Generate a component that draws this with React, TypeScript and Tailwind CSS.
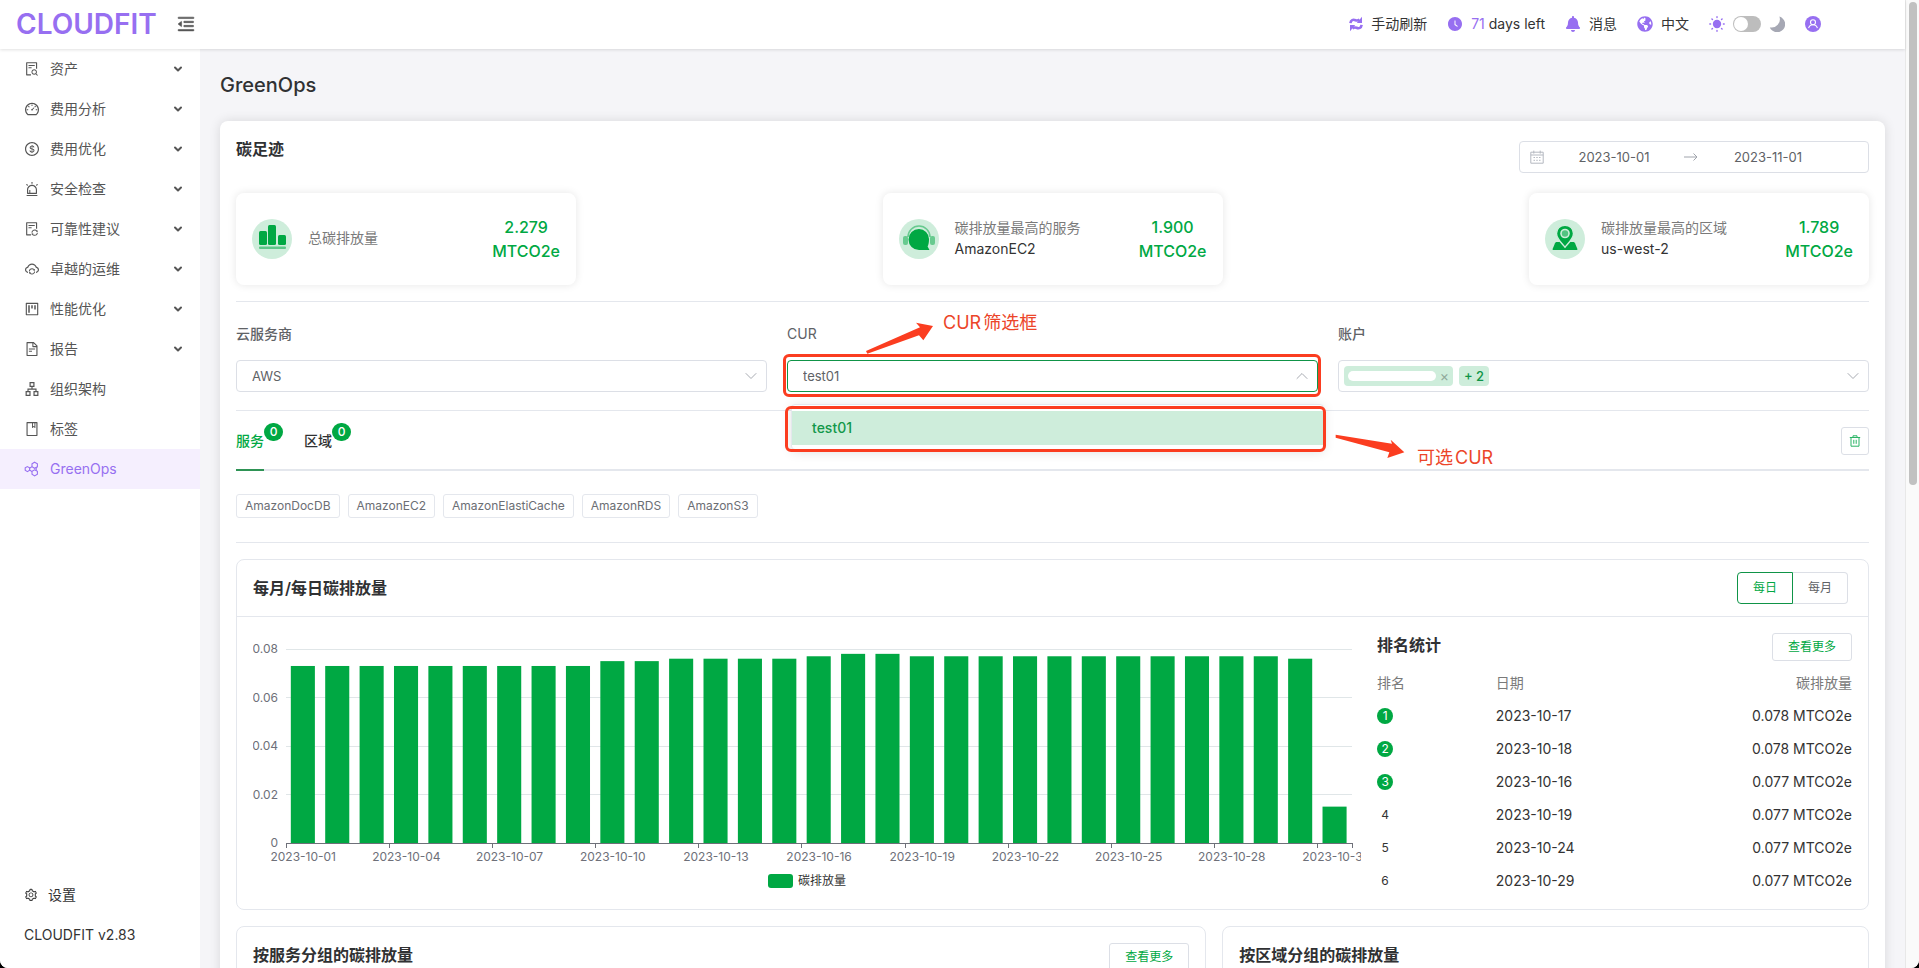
import React from "react";
import {
  AiFillClockCircle,
  AiOutlineAlert,
  AiOutlineApartment,
  AiOutlineBook,
  AiOutlineCloudSync,
  AiOutlineDashboard,
  AiOutlineDollar,
  AiOutlineFileSearch,
  AiOutlineFileSync,
  AiOutlineFileText,
  AiOutlineMenuFold,
  AiOutlineProject,
  AiOutlineSetting,
} from "react-icons/ai";
import { FaBell, FaGlobeAmericas } from "react-icons/fa";
import { ChevronDown, ChevronUp } from "lucide-react";

const GreenOpsIcon = () => (
  <svg width="16" height="16" viewBox="0 0 16 16" fill="none" stroke="currentColor" strokeWidth="1.1">
    <path d="M3.4 5.6 5.6 6.9v2.4L3.4 10.6 1.2 9.3V6.9Z" />
    <path d="M10.6 1.2 13.4 2.8v3L10.6 7.3 8 5.8v-3Z" />
    <path d="M10.6 8.8 13.4 10.3v3L10.6 14.9 8 13.3v-3Z" />
    <path d="M5.6 7.2 8 5.6M5.6 9 8 10.6M12.2 6.5v3.2" />
  </svg>
);

const menu = [
  { label: "资产", icon: <AiOutlineFileSearch />, open: true },
  { label: "费用分析", icon: <AiOutlineDashboard />, open: true },
  { label: "费用优化", icon: <AiOutlineDollar />, open: true },
  { label: "安全检查", icon: <AiOutlineAlert />, open: true },
  { label: "可靠性建议", icon: <AiOutlineFileSync />, open: true },
  { label: "卓越的运维", icon: <AiOutlineCloudSync />, open: true },
  { label: "性能优化", icon: <AiOutlineProject />, open: true },
  { label: "报告", icon: <AiOutlineFileText />, open: true },
  { label: "组织架构", icon: <AiOutlineApartment /> },
  { label: "标签", icon: <AiOutlineBook /> },
  { label: "GreenOps", icon: <GreenOpsIcon />, active: true },
];

const services = ["AmazonDocDB", "AmazonEC2", "AmazonElastiCache", "AmazonRDS", "AmazonS3"];

const daily = [
  0.073, 0.073, 0.073, 0.073, 0.073, 0.073, 0.073, 0.073, 0.073, 0.075, 0.075,
  0.076, 0.076, 0.076, 0.076, 0.077, 0.078, 0.078, 0.077, 0.077, 0.077, 0.077,
  0.077, 0.077, 0.077, 0.077, 0.077, 0.077, 0.077, 0.076, 0.015,
];

const ranking = [
  ["2023-10-17", "0.078 MTCO2e"],
  ["2023-10-18", "0.078 MTCO2e"],
  ["2023-10-16", "0.077 MTCO2e"],
  ["2023-10-19", "0.077 MTCO2e"],
  ["2023-10-24", "0.077 MTCO2e"],
  ["2023-10-29", "0.077 MTCO2e"],
];

const Header = () => {
  return (
    <header className="relative z-10 flex h-[49px] shrink-0 items-center bg-white pb-0.5 pl-4 shadow-[0_1px_3px_rgba(0,0,0,0.12)]">
      <div className="w-36 text-[28px] font-semibold leading-none text-[#976ff1]">CLOUDFIT</div>
      <button aria-label="收起菜单" className="ml-4 text-xl text-[#555]">
        <AiOutlineMenuFold stroke="currentColor" strokeWidth="30" />
      </button>
      <div className="ml-auto mr-[84px] flex items-center text-sm text-[#333]">
        <button className="flex items-center gap-2">
          <svg width="14" height="16" viewBox="0 0 14 16" fill="none" stroke="#976ff1" strokeWidth="2.6">
            <path d="M1.400 7.200C1.800 3.800 4.200 3.200 6.500 4.200c1.600.7 2.800.4 4-.6" />
            <path d="M12.600 8.800c-.4 3.400-2.800 4-5.100 3-1.600-.7-2.800-.4-4 .6" />
            <path d="M13 .8v6.200H7.800ZM1 15.200V9h5.200Z" fill="#976ff1" stroke="none" />
          </svg>
          手动刷新
        </button>
        <div className="ml-5 flex items-center gap-2">
          <AiFillClockCircle className="text-base text-[#976ff1]" />
          <span>
            <span className="text-[#976ff1]">71</span> days left
          </span>
        </div>
        <button className="ml-5 flex items-center gap-2">
          <FaBell className="text-base text-[#976ff1]" />
          消息
        </button>
        <button className="ml-5 flex items-center gap-2">
          <FaGlobeAmericas className="text-base text-[#976ff1]" />
          中文
        </button>
        <svg className="ml-5" width="16" height="16" viewBox="0 0 16 16">
          <circle cx="8" cy="8" r="4.2" fill="#976ff1" />
          <g stroke="#976ff1" strokeWidth="1.4" strokeLinecap="round">
            <path d="M8 .8v.8M8 14.4v.8M.8 8h.8M14.4 8h.8M2.9 2.9l.6.6M12.5 12.5l.6.6M2.9 13.1l.6-.6M12.5 3.5l.6-.6" />
          </g>
        </svg>
        <input
          type="checkbox"
          role="switch"
          aria-label="深色模式"
          className="relative ml-2 h-4 w-7 appearance-none rounded-full bg-[#bdbdbd] before:absolute before:left-px before:top-px before:size-3.5 before:rounded-full before:bg-white checked:before:left-3"
        />
        <svg className="ml-2" width="16" height="16" viewBox="0 0 16 16">
          <path d="M10.4.6A8 8 0 1 1 .8 11.4 8.3 8.3 0 0 0 10.4.6Z" fill="#a6a8b4" />
        </svg>
        <button aria-label="用户" className="ml-5">
          <svg width="16" height="16" viewBox="0 0 16 16" fill="none">
            <circle cx="8" cy="8" r="8" fill="#976ff1" />
            <circle cx="8" cy="6.2" r="2.5" stroke="#fff" strokeWidth="1.1" />
            <path d="M3.6 12.2c.5-2.2 2.1-3.5 4.4-3.5s3.9 1.3 4.4 3.5" stroke="#fff" strokeWidth="1.1" />
          </svg>
        </button>
      </div>
    </header>
  );
};

const Sidebar = () => {
  return (
    <nav className="flex w-[200px] shrink-0 flex-col bg-white text-sm text-[#555]">
      {menu.map((item) => (
        <a
          key={item.label}
          href="#"
          className={`flex h-10 items-center gap-2.5 pl-6 pr-4 ${item.active ? "bg-[#f5effe] text-[#976ff1]" : ""}`}
        >
          <span className="text-base">{item.icon}</span>
          {item.label}
          {item.open && <ChevronDown size={12} strokeWidth={4} className="ml-auto" />}
        </a>
      ))}
      <a href="#" className="mt-auto flex h-10 items-center gap-2.5 pl-6 text-[#333]">
        <AiOutlineSetting className="text-sm" />
        设置
      </a>
      <div className="mb-[13px] flex h-10 items-center pl-6 text-[#333]">CLOUDFIT v2.83</div>
    </nav>
  );
};

type StatProps = {
  icon: React.ReactNode;
  label: string;
  name?: string;
  value: string;
};

const StatCard = ({ icon, label, name, value }: StatProps) => {
  return (
    <div className="flex h-[92px] w-[340px] items-center rounded-lg bg-white px-4 shadow-[0_0_8px_rgba(0,0,0,0.1)]">
      <svg width="40" height="40" viewBox="0 0 40 40">
        <circle cx="20" cy="20" r="20" fill="#ceeddb" />
        {icon}
      </svg>
      <div className="ml-4 pb-[3px] text-sm leading-[21px]">
        <div className="text-[#7a7a7a]">{label}</div>
        {name && <div className="text-[#333]">{name}</div>}
      </div>
      <div className="ml-auto text-center font-medium text-[#00a843]">
        {value}
        <br />
        MTCO2e
      </div>
    </div>
  );
};

const BarsIcon = (
  <g fill="#00a843">
    <rect x="7" y="12" width="8" height="14" rx="1.5" />
    <rect x="16" y="6" width="8" height="20" rx="1.5" />
    <rect x="26" y="16" width="8" height="10" rx="1.5" />
    <rect x="7" y="27.5" width="27" height="2.5" rx="1" opacity=".55" />
  </g>
);

const HeadsetIcon = (
  <g fill="#00a843">
    <path d="M9 18a11 11 0 0 1 22 0" fill="none" stroke="#00a843" strokeWidth="1.5" opacity=".5" />
    <rect x="4" y="17" width="5" height="9" rx="2" opacity=".5" />
    <rect x="31" y="17" width="5" height="9" rx="2" opacity=".5" />
    <path d="M20 10a10 10 0 0 1 10 10c0 3-.4 5.500-1.400 7.500l1.900 3.500H20A10.500 10.500 0 0 1 20 10Z" />
  </g>
);

const PinIcon = (
  <g fill="#00a843">
    <path d="M12 23h16c1 0 1.600.4 2 1.300l2.300 5.500c.3.800 0 1.200-.8 1.200H8.500c-.8 0-1.100-.4-.8-1.200L10 24.300c.4-.9 1-1.300 2-1.300Z" />
    <path
      d="M20 6.200c4.900 0 8.500 3.700 8.500 8.300 0 5-4.300 8.800-8.500 13.700-4.200-4.900-8.500-8.700-8.500-13.700 0-4.600 3.600-8.300 8.500-8.300Z"
      stroke="#ceeddb"
      strokeWidth="1.4"
    />
    <circle cx="20" cy="14.5" r="4.8" fill="#ceeddb" />
    <circle cx="20" cy="14.5" r="3.2" opacity=".6" />
  </g>
);

const Filters = () => {
  return (
    <div className="grid grid-cols-3 gap-5 pb-[18px] pt-5 text-sm text-[#606266]">
      <div>
        <label htmlFor="vendor" className="block leading-6 font-medium">
          云服务商
        </label>
        <div className="relative mt-3.5">
          <select id="vendor" className="block h-8 w-full appearance-none rounded border border-[#dcdfe6] px-[15px] text-[13px]">
            <option>AWS</option>
          </select>
          <ChevronDown size={20} strokeWidth={1.2} className="absolute right-1.5 top-1.5 text-[#a8abb2]" />
        </div>
      </div>

      <div>
        <label htmlFor="cur" className="block leading-6">
          CUR
        </label>
        <div className="relative z-20 mt-3.5">
          <select id="cur" className="block h-8 w-full appearance-none rounded border border-[#0f9447] px-[15px] text-[13px]">
            <option>test01</option>
          </select>
          <ChevronUp size={20} strokeWidth={1.2} className="absolute right-1.5 top-1.5 text-[#a8abb2]" />

          {/* Opened option list */}
          <ul
            role="listbox"
            aria-label="CUR"
            className="absolute -right-1.5 left-1 top-11 rounded border border-[#e4e7ed] bg-white pb-1 pt-1.5 shadow-[0_2px_12px_rgba(0,0,0,0.12)]"
          >
            <li role="option" aria-selected="true" className="h-[34px] bg-[#ceeddb] px-5 font-medium leading-[34px] text-[#12984a]">
              test01
            </li>
          </ul>

          {/* Callouts */}
          <div className="pointer-events-none absolute -bottom-[5px] -left-1 -right-[3px] -top-1.5 rounded-md border-3 border-[#fb3d20]" />
          <div className="pointer-events-none absolute -left-0.5 -right-2 top-[46px] h-[46px] rounded-md border-3 border-[#fb3d20]" />
          <svg className="absolute -top-[50px] left-[73px]" width="75" height="48" viewBox="0 0 225 144" fill="#fb3d20">
            <path d="M18 123 180 52 168 38 219 48 190 91 177 76 22 131Z" />
          </svg>
          <span className="absolute -top-[51px] left-[156px] flex gap-0.5 text-lg leading-7 text-[#ec4529]">
            <span>CUR</span>
            <span>筛选框</span>
          </span>
          <svg className="absolute -top-[5px] left-full" width="90" height="107" viewBox="0 0 270 321" fill="#fb3d20">
            <path d="M53 239 222 266 218 254 259 292 208 309 214 292 53 248Z" />
          </svg>
          <span className="absolute left-full top-[84px] ml-[99px] flex gap-0.5 whitespace-nowrap text-lg leading-7 text-[#ec4529]">
            <span>可选</span>
            <span>CUR</span>
          </span>
        </div>
      </div>

      <div>
        <label htmlFor="account" className="block leading-6 font-medium">
          账户
        </label>
        <div className="relative mt-3.5 flex h-8 items-center gap-1.5 rounded border border-[#dcdfe6] px-[5px]">
          <span className="flex h-5 w-[109px] items-center justify-between rounded bg-[#ceeddb] px-1">
            <span className="h-2.5 w-[88px] rounded-full bg-white" />
            <button aria-label="移除账户" className="text-sm leading-none text-[#8fa89a]">
              ×
            </button>
          </span>
          <span className="h-5 w-[30px] rounded bg-[#ceeddb] text-center text-[13px] leading-5 font-medium text-[#0f9447]">
            + 2
          </span>
          <input id="account" className="min-w-0 flex-1 outline-none" />
          <ChevronDown size={20} strokeWidth={1.2} className="text-[#a8abb2]" />
        </div>
      </div>
    </div>
  );
};

const TabBadge = () => (
  <span className="absolute left-full top-3 flex h-[18px] w-[19px] items-center justify-center rounded-full bg-[#00a843] text-xs text-white">
    0
  </span>
);

const Tabs = () => {
  return (
    <div role="tablist" className="relative flex h-[61px] items-end border-t border-[#e4e7ed] text-sm font-medium">
      <div className="absolute inset-x-0 bottom-0 h-0.5 bg-[#e4e7ed]" />
      <button role="tab" aria-selected="true" className="relative h-[60px] border-b-2 border-[#2e9355] pt-0.5 text-[#00a843]">
        服务
        <TabBadge />
      </button>
      <button
        role="tab"
        aria-selected="false"
        className="relative ml-10 h-[60px] border-b-2 border-transparent pt-0.5 text-[#303133]"
      >
        区域
        <TabBadge />
      </button>
      <button
        aria-label="清空"
        className="mb-4 ml-auto flex size-7 items-center justify-center rounded-[3px] border border-[#dcdfe6]"
      >
        <svg width="12" height="12" viewBox="0 0 12 12" fill="none" stroke="#2bb466" strokeWidth="1">
          <path d="M.8 2.500h10.400M4 2.500V.8h4v1.700M2 2.500v8.700h8V2.500M4.800 4.800v4M7.200 4.800v4" />
        </svg>
      </button>
    </div>
  );
};

const PLOT_TOP = 32;
const PLOT_HEIGHT = 194;

const EmissionChart = () => {
  const baseline = PLOT_TOP + PLOT_HEIGHT;
  const band = 100 / daily.length;
  const marks = daily.map((_, i) => i).filter((i) => i % 3 === 0);

  return (
    <div className="overflow-hidden">
      <div className="pl-[33px] pr-[9px]">
        <svg width="100%" height="248" className="overflow-visible text-xs" fill="#6e7079">
          {[0, 0.02, 0.04, 0.06, 0.08].map((v) => {
            const y = baseline - (v / 0.08) * PLOT_HEIGHT;
            return (
              <g key={v}>
                {v > 0 && <line x1="0" x2="100%" y1={y} y2={y} stroke="#e0e6e8" shapeRendering="crispEdges" />}
                <text x="-8" y={y + 4} textAnchor="end">
                  {v}
                </text>
              </g>
            );
          })}
          {daily.map((v, i) => {
            const h = (v / 0.08) * PLOT_HEIGHT;
            return (
              <rect
                key={i}
                x={`${(i + 0.14) * band}%`}
                y={baseline - h}
                width={`${band * 0.7}%`}
                height={h}
                fill="#00a843"
              />
            );
          })}
          <line x1="0" x2="100%" y1={baseline} y2={baseline} stroke="#6e7079" shapeRendering="crispEdges" />
          {[...marks, daily.length].map((i) => (
            <line
              key={i}
              x1={`${i * band}%`}
              x2={`${i * band}%`}
              y1={baseline}
              y2={baseline + 5}
              stroke="#6e7079"
              shapeRendering="crispEdges"
            />
          ))}
          {marks.map((i) => (
            <text key={i} x={`${(i + 0.5) * band}%`} y={baseline + 18} textAnchor="middle">
              {`2023-10-${String(i + 1).padStart(2, "0")}`}
            </text>
          ))}
        </svg>
      </div>
      <div className="flex h-8 items-center justify-center gap-[5px] text-xs text-[#333]">
        <span className="h-3.5 w-[25px] rounded-[3px] bg-[#00a843]" />
        碳排放量
      </div>
    </div>
  );
};

const MoreButton = () => (
  <button className="h-7 w-20 rounded-[3px] border border-[#dcdfe6] text-xs text-[#00a843]">查看更多</button>
);

const Ranking = () => {
  return (
    <div className="pb-3 pt-4">
      <div className="flex items-start justify-between">
        <h3 className="text-base font-semibold text-[#303133]">排名统计</h3>
        <MoreButton />
      </div>
      <table className="mt-[5px] w-full text-sm text-[#333]">
        <thead>
          <tr className="h-[33px] text-[#7a7a7a]">
            <th className="w-1/4 text-left font-normal">排名</th>
            <th className="text-left font-normal">日期</th>
            <th className="text-right font-normal">碳排放量</th>
          </tr>
        </thead>
        <tbody>
          {ranking.map(([date, amount], i) => (
            <tr key={date} className="h-[33px]">
              <td>
                <span
                  className={`flex size-4 items-center justify-center rounded-full text-xs ${i < 3 ? "bg-[#00a843] text-white" : ""}`}
                >
                  {i + 1}
                </span>
              </td>
              <td>{date}</td>
              <td className="text-right">{amount}</td>
            </tr>
          ))}
        </tbody>
      </table>
    </div>
  );
};

const App = () => {
  return (
    <div className="h-screen bg-black font-['Inter','Noto_Sans_CJK_SC',sans-serif]">
      <div className="flex h-full overflow-hidden rounded-b-lg bg-white">
        <div className="flex min-w-0 flex-1 flex-col">
          <Header />
          <div className="flex min-h-0 flex-1">
            <Sidebar />
            <main className="min-w-0 flex-1 overflow-hidden bg-[#f5f5f8] px-5 pt-5">
              <h1 className="mb-5 text-xl font-medium leading-8 text-[#303133]">GreenOps</h1>
              <section className="rounded-lg bg-white p-4 shadow-[0_0_12px_rgba(0,0,0,0.12)]">
                <div className="mb-5 flex items-start justify-between">
                  <h2 className="text-base font-semibold text-[#303133]">碳足迹</h2>
                  <div className="mt-1 flex h-8 w-[350px] items-center rounded border border-[#dcdfe6] px-2.5 text-[13px] text-[#606266]">
                    <svg width="14" height="14" viewBox="0 0 14 14" fill="none" stroke="#b4b8c0">
                      <path d="M.8 2.200h12.400v11H.8ZM.8 5h12.400M3.800.6v3M10.200.6v3" />
                      <path d="M3.500 7.500h7M3.500 10.300h7" strokeDasharray="1.5 1.25" />
                    </svg>
                    <input aria-label="开始日期" defaultValue="2023-10-01" className="min-w-0 flex-1 pt-0.5 text-center" />
                    <svg width="14" height="10" viewBox="0 0 14 10" fill="none" stroke="#a0a4ac">
                      <path d="M0 5h13M9.500 1.500 13 5 9.500 8.500" />
                    </svg>
                    <input aria-label="结束日期" defaultValue="2023-11-01" className="min-w-0 flex-1 pt-0.5 text-center" />
                    <span className="w-5" />
                  </div>
                </div>

                <div className="flex justify-between border-b border-[#e4e7ed] pb-4">
                  <StatCard icon={BarsIcon} label="总碳排放量" value="2.279" />
                  <StatCard icon={HeadsetIcon} label="碳排放量最高的服务" name="AmazonEC2" value="1.900" />
                  <StatCard icon={PinIcon} label="碳排放量最高的区域" name="us-west-2" value="1.789" />
                </div>

                <Filters />
                <Tabs />

                <div className="flex gap-2 border-b border-[#e4e7ed] pb-6 pt-[23px]">
                  {services.map((name) => (
                    <button
                      key={name}
                      className="h-6 rounded-[3px] border border-[#e4e7ed] px-2 text-xs text-[#6b6e74]"
                    >
                      {name}
                    </button>
                  ))}
                </div>

                <section className="mt-4 rounded-lg border border-[#e4e7ed]">
                  <div className="flex h-[57px] items-center justify-between border-b border-[#e4e7ed] pl-4 pr-5">
                    <h3 className="text-base font-semibold text-[#303133]">每月/每日碳排放量</h3>
                    <div className="flex h-8 text-xs text-[#606266]">
                      <button className="w-14 rounded-l border border-[#0f9447] text-[#00a843]">每日</button>
                      <button className="w-[55px] rounded-r border border-l-0 border-[#dcdfe6]">每月</button>
                    </div>
                  </div>
                  <div className="grid grid-cols-[7fr_3fr] gap-4 px-4">
                    <EmissionChart />
                    <Ranking />
                  </div>
                </section>

                <div className="mt-4 grid grid-cols-[3fr_2fr] gap-4">
                  <section className="h-80 rounded-lg border border-[#e4e7ed]">
                    <div className="flex items-start justify-between px-4 pt-4">
                      <h3 className="text-base font-semibold text-[#303133]">按服务分组的碳排放量</h3>
                      <MoreButton />
                    </div>
                  </section>
                  <section className="h-80 rounded-lg border border-[#e4e7ed]">
                    <h3 className="px-4 pt-4 text-base font-semibold text-[#303133]">按区域分组的碳排放量</h3>
                  </section>
                </div>
              </section>
            </main>
          </div>
        </div>

        {/* Scroll track */}
        <div className="w-3.5 shrink-0 border-l border-[#e8e8e8] bg-[#fafafa] px-[3px] pt-0.5">
          <div className="h-1/2 w-2 rounded-full bg-[#c1c1c1]" />
        </div>
      </div>
    </div>
  );
};

export default App;
